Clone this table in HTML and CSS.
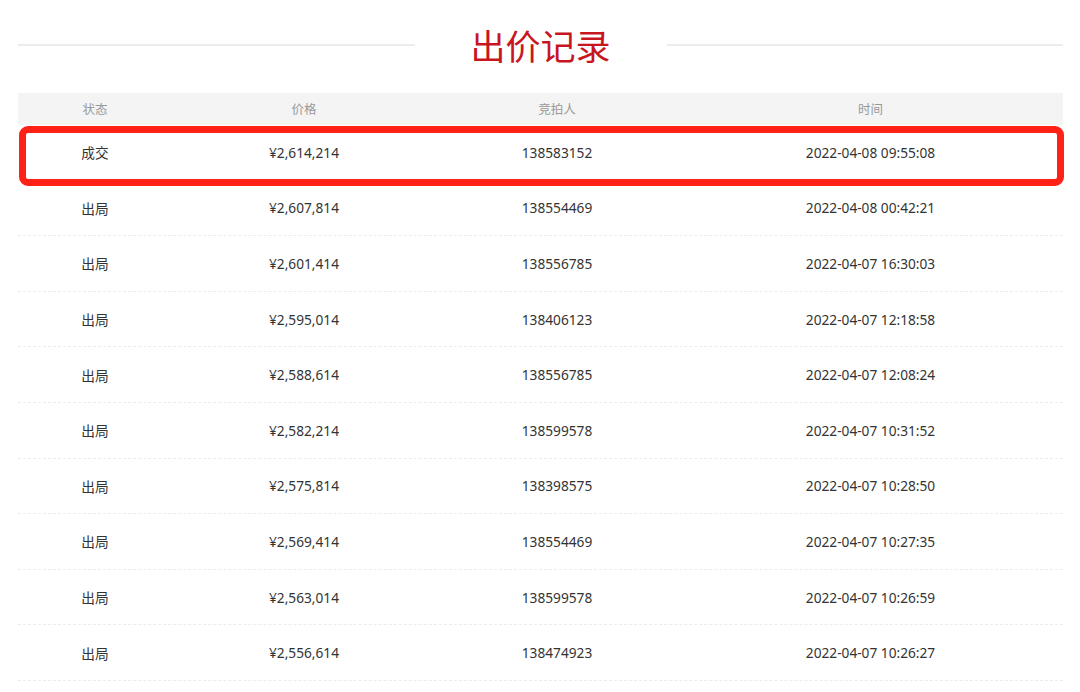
FILE: index.html
```html
<!DOCTYPE html>
<html lang="zh-CN">
<head>
<meta charset="utf-8">
<title>出价记录</title>
<link rel="stylesheet" href="styles.css">
</head>
<body>
<div class="page">
  <div class="heading">
    <span class="rule"></span>
    <h1 class="title">出价记录</h1>
    <span class="rule"></span>
  </div>
  <div class="table">
    <div class="row head">
      <div class="c1">状态</div><div class="c2">价格</div><div class="c3">竞拍人</div><div class="c4">时间</div>
    </div>
    <div class="row win">
      <div class="c1">成交</div><div class="c2">¥2,614,214</div><div class="c3">138583152</div><div class="c4">2022-04-08 09:55:08</div>
      <span class="mark"></span>
    </div>
    <div class="row">
      <div class="c1">出局</div><div class="c2">¥2,607,814</div><div class="c3">138554469</div><div class="c4">2022-04-08 00:42:21</div>
    </div>
    <div class="row">
      <div class="c1">出局</div><div class="c2">¥2,601,414</div><div class="c3">138556785</div><div class="c4">2022-04-07 16:30:03</div>
    </div>
    <div class="row">
      <div class="c1">出局</div><div class="c2">¥2,595,014</div><div class="c3">138406123</div><div class="c4">2022-04-07 12:18:58</div>
    </div>
    <div class="row">
      <div class="c1">出局</div><div class="c2">¥2,588,614</div><div class="c3">138556785</div><div class="c4">2022-04-07 12:08:24</div>
    </div>
    <div class="row">
      <div class="c1">出局</div><div class="c2">¥2,582,214</div><div class="c3">138599578</div><div class="c4">2022-04-07 10:31:52</div>
    </div>
    <div class="row">
      <div class="c1">出局</div><div class="c2">¥2,575,814</div><div class="c3">138398575</div><div class="c4">2022-04-07 10:28:50</div>
    </div>
    <div class="row">
      <div class="c1">出局</div><div class="c2">¥2,569,414</div><div class="c3">138554469</div><div class="c4">2022-04-07 10:27:35</div>
    </div>
    <div class="row">
      <div class="c1">出局</div><div class="c2">¥2,563,014</div><div class="c3">138599578</div><div class="c4">2022-04-07 10:26:59</div>
    </div>
    <div class="row">
      <div class="c1">出局</div><div class="c2">¥2,556,614</div><div class="c3">138474923</div><div class="c4">2022-04-07 10:26:27</div>
    </div>
  </div>
</div>
</body>
</html>
```
FILE: styles.css
```css
html, body {
  margin: 0;
  padding: 0;
  background: #fff;
}
body {
  font-family: "Noto Sans", "Noto Sans CJK SC", sans-serif;
  color: #333;
}
.page {
  width: 1045px;
  padding: 0 17px 0 18px;
}
.heading {
  display: flex;
  align-items: center;
  height: 50px;
  margin-top: 20px;
}
.rule {
  flex: 1;
  height: 2px;
  background: #ececec;
}
.title {
  margin: 0;
  padding: 0 56px;
  font-family: "Noto Sans CJK SC", sans-serif;
  font-weight: 400;
  font-size: 35px;
  line-height: 50px;
  color: #c8161e;
}
.table {
  margin-top: 23px;
}
.row {
  position: relative;
  display: grid;
  grid-template-columns: 154px 264px 242px 385px;
  height: 55.6px;
  align-items: center;
  text-align: center;
  font-size: 13.7px;
  border-bottom: 1px dashed #ececec;
  box-sizing: border-box;
}
.row.head {
  height: 32px;
  padding-bottom: 2px;
  background: #f4f4f4;
  color: #999;
  font-size: 12.5px;
  border-bottom: none;
}
.row .c1 {
  font-family: "Noto Sans CJK SC", sans-serif;
}
.mark {
  position: absolute;
  top: 1px;
  left: 1px;
  right: -1px;
  height: 60px;
  border: 7px solid #ff2016;
  border-radius: 9px;
  box-sizing: border-box;
}
```
